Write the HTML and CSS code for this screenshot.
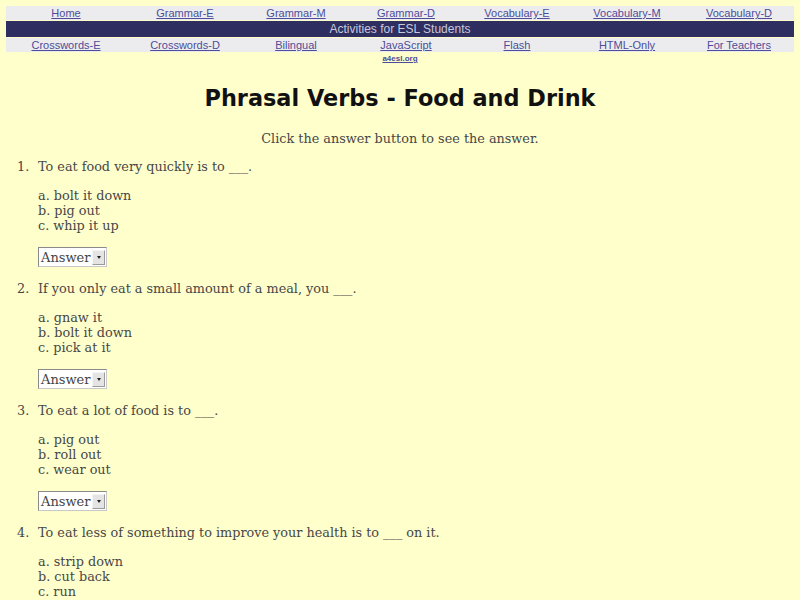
FILE: index.html
```html
<!DOCTYPE html>
<html lang="en">
<head>
<meta charset="utf-8">
<title>Phrasal Verbs - Food and Drink</title>
<link rel="stylesheet" href="styles.css">
</head>
<body>
<nav class="nav">
  <div class="row links">
    <a href="#">Home</a>
    <a href="#">Grammar-E</a>
    <a href="#">Grammar-M</a>
    <a href="#">Grammar-D</a>
    <a href="#">Vocabulary-E</a>
    <a href="#">Vocabulary-M</a>
    <a href="#">Vocabulary-D</a>
  </div>
  <div class="row banner">Activities for ESL Students</div>
  <div class="row links">
    <a href="#">Crosswords-E</a>
    <a href="#">Crosswords-D</a>
    <a href="#">Bilingual</a>
    <a href="#">JavaScript</a>
    <a href="#">Flash</a>
    <a href="#">HTML-Only</a>
    <a href="#">For Teachers</a>
  </div>
  <div class="site"><a href="#">a4esl.org</a></div>
</nav>

<h1 class="title">Phrasal Verbs - Food and Drink</h1>
<p class="intro">Click the answer button to see the answer.</p>

<ol class="quiz">
  <li class="q">
    <div class="stem">To eat food very quickly is to ___.</div>
    <div class="opts">
      <div>a. bolt it down</div>
      <div>b. pig out</div>
      <div>c. whip it up</div>
    </div>
    <div class="answer"><span class="val">Answer</span><span class="btn"><span class="tri"></span></span></div>
  </li>
  <li class="q">
    <div class="stem">If you only eat a small amount of a meal, you ___.</div>
    <div class="opts">
      <div>a. gnaw it</div>
      <div>b. bolt it down</div>
      <div>c. pick at it</div>
    </div>
    <div class="answer"><span class="val">Answer</span><span class="btn"><span class="tri"></span></span></div>
  </li>
  <li class="q">
    <div class="stem">To eat a lot of food is to ___.</div>
    <div class="opts">
      <div>a. pig out</div>
      <div>b. roll out</div>
      <div>c. wear out</div>
    </div>
    <div class="answer"><span class="val">Answer</span><span class="btn"><span class="tri"></span></span></div>
  </li>
  <li class="q">
    <div class="stem">To eat less of something to improve your health is to ___ on it.</div>
    <div class="opts">
      <div>a. strip down</div>
      <div>b. cut back</div>
      <div>c. run</div>
    </div>
    <div class="answer"><span class="val">Answer</span><span class="btn"><span class="tri"></span></span></div>
  </li>
</ol>
</body>
</html>
```
FILE: styles.css
```css
html, body {
  margin: 0;
  padding: 0;
}
body {
  background: #ffffcc;
  color: #474747;
  font-family: "DejaVu Serif", serif;
  font-size: 12.8px;
}
.nav {
  margin: 6px 6px 0 6px;
  display: flex;
  flex-direction: column;
  gap: 1px;
}
.row {
  display: grid;
  grid-template-columns: 120px 118px 104px 116px 106px 114px 1fr;
  align-items: center;
}
.links {
  background: #ececee;
  height: 14px;
}
.links a {
  text-align: center;
  font-family: "Liberation Sans", Arial, sans-serif;
  font-size: 11px;
  color: #4d4d99;
  text-decoration: underline;
  line-height: 14px;
}
.banner {
  display: block;
  background: #2e2e60;
  color: #c8c8dc;
  height: 16px;
  line-height: 17px;
  text-align: center;
  font-family: "Liberation Sans", Arial, sans-serif;
  font-size: 12px;
}
.site {
  text-align: center;
  line-height: 9px;
  margin-top: -1px;
}
.site a {
  font-family: "Liberation Sans", Arial, sans-serif;
  font-size: 8px;
  font-weight: bold;
  color: #4d4d99;
}
.title {
  margin: 20px 0 0 0;
  text-align: center;
  font-family: "DejaVu Sans", sans-serif;
  font-weight: bold;
  font-size: 22.4px;
  line-height: 30px;
  color: #111111;
}
.intro {
  margin: 18px 0 0 0;
  text-align: center;
  line-height: 15px;
}
.quiz {
  list-style: none;
  margin: 13px 0 0 0;
  padding: 0 0 0 38px;
  counter-reset: q;
}
.q {
  counter-increment: q;
  position: relative;
  display: flex;
  flex-direction: column;
  align-items: flex-start;
  padding-bottom: 14px;
  line-height: 15px;
}
.stem::before {
  content: counter(q) ".";
  position: absolute;
  left: -21px;
}
.opts {
  margin-top: 14px;
}
.answer {
  margin-top: 14px;
  display: inline-flex;
  align-items: center;
  justify-content: space-between;
  width: 69px;
  height: 20px;
  box-sizing: border-box;
  border: 1px solid #8a8a8a;
  border-right-color: #c8c8c8;
  border-bottom-color: #c8c8c8;
  background: #ffffff;
  padding: 0 1px 0 2px;
  font-size: 13px;
  color: #444444;
}
.btn {
  width: 11px;
  height: 13px;
  background: #e4e4e4;
  border: 1px solid #9a9a9a;
  border-top-color: #f4f4f4;
  border-left-color: #f4f4f4;
  display: flex;
  align-items: center;
  justify-content: center;
}
.tri {
  width: 0;
  height: 0;
  border-left: 2.5px solid transparent;
  border-right: 2.5px solid transparent;
  border-top: 3px solid #222222;
}
```
